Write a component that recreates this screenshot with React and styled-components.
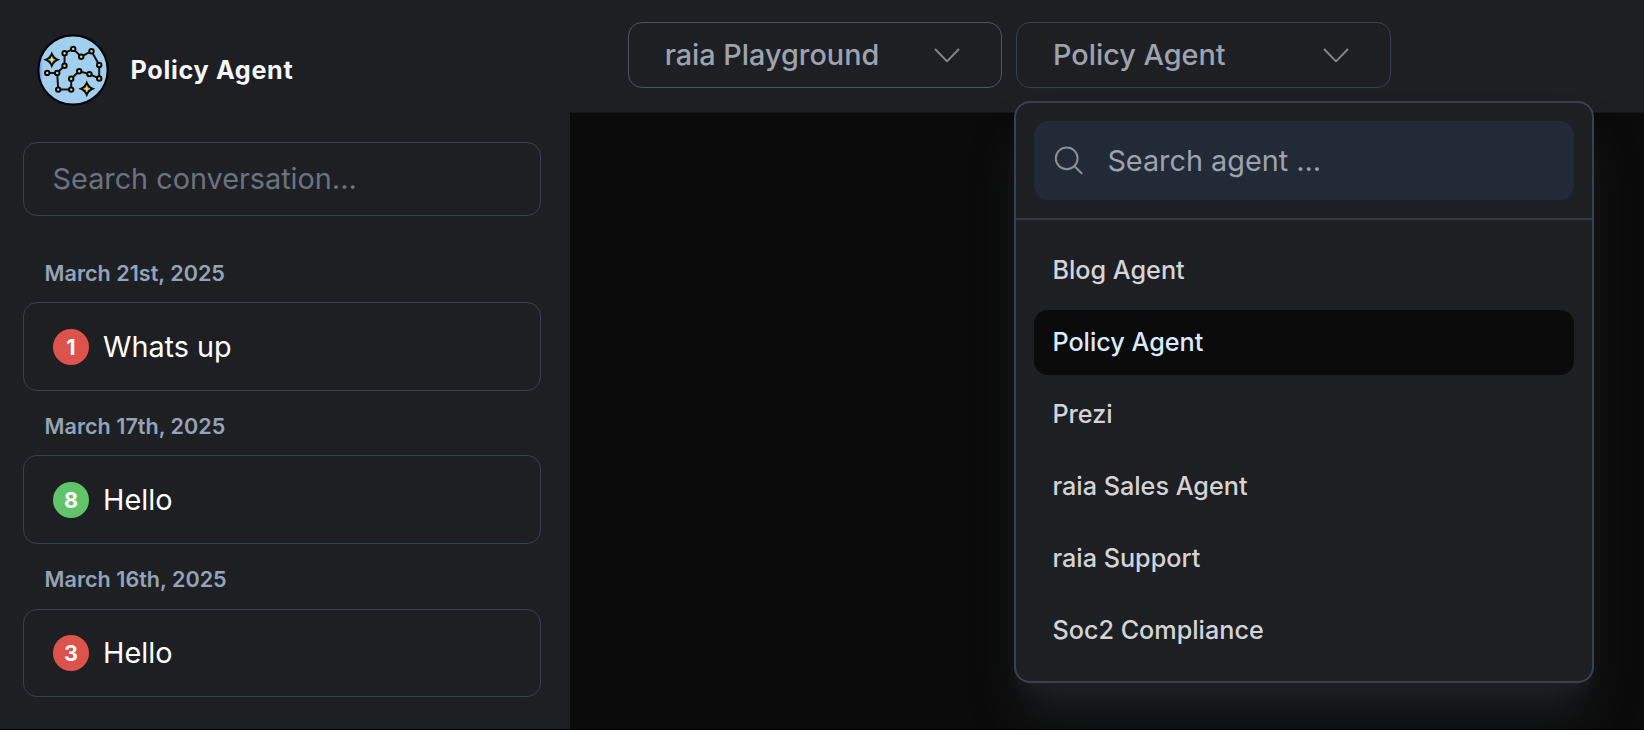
import React from 'react';
import styled, { createGlobalStyle } from 'styled-components';

const GlobalStyle = createGlobalStyle`
  *, *::before, *::after { box-sizing: border-box; }
  body {
    margin: 0;
    background: #000;
    font-family: Inter, "Liberation Sans", sans-serif;
    -webkit-font-smoothing: antialiased;
  }
`;

const Page = styled.div`
  display: flex;
  width: 1644px;
  height: 730px;
  overflow: hidden;
  background: #0b0b0b;
  border-bottom: 1px solid #000;
`;

const Sidebar = styled.aside`
  width: 570px;
  flex: none;
  padding: 34px 29px 0 23px;
  background: #1e1f23;
`;

const AgentHeader = styled.div`
  display: flex;
  align-items: center;
  gap: 21.6px;
  height: 72px;
  padding-left: 14px;
`;

const Avatar = styled.svg`
  width: 72px;
  height: 72px;
  flex: none;
`;

const AgentName = styled.h1`
  margin: 0;
  font-size: 25.2px;
  line-height: 36px;
  font-weight: 700;
  letter-spacing: 0.66px;
  color: #f5f6fa;
`;

const ConversationSearch = styled.input`
  display: block;
  width: 518px;
  height: 74px;
  margin-top: 36px;
  padding: 0 28.6px 2px;
  border: 1px solid #374151;
  border-radius: 14px;
  background: transparent;
  font: 400 28.8px/40px Inter, sans-serif;
  color: #fff;
  &::placeholder { color: #6b7280; opacity: 1; }
`;

const ConversationGroups = styled.div`
  display: flex;
  flex-direction: column;
  gap: 19.35px;
  padding-top: 41px;
`;

const DateLabel = styled.h2`
  margin: 0 0 13.3px 21.6px;
  font-size: 21.6px;
  line-height: 32px;
  font-weight: 600;
  color: #94a3b8;
`;

const ConversationCard = styled.div`
  display: flex;
  align-items: center;
  gap: 14px;
  width: 518px;
  height: 88.5px;
  padding: 0 29px;
  border: 1px solid #374151;
  border-radius: 14px;
`;

const CountBadge = styled.span`
  display: flex;
  align-items: center;
  justify-content: center;
  width: 36px;
  height: 36px;
  border-radius: 50%;
  background: ${(p) => (p.$tone === 'green' ? '#62c46a' : '#de524c')};
  font-size: 21.6px;
  line-height: 36px;
  font-weight: 700;
  color: #fff;
`;

const ConversationTitle = styled.span`
  font-size: 28.8px;
  line-height: 40px;
  font-weight: 400;
  color: #fff;
`;

const Main = styled.main`
  flex: 1;
  min-width: 0;
`;

const TopBar = styled.header`
  display: flex;
  gap: 14px;
  height: 113px;
  padding: 22px 0 0 58px;
  background: #1e1f23;
  border-bottom: 1px solid #16171a;
`;

const SelectAnchor = styled.div`
  position: relative;
  width: 374.4px;
  height: 66px;
`;

const SelectButton = styled.button`
  display: flex;
  align-items: center;
  justify-content: space-between;
  width: 100%;
  height: 100%;
  padding: 0 40px 0 35.7px;
  border: 1px solid ${(p) => (p.$strong ? '#4b5563' : '#374151')};
  border-radius: 14px;
  background: transparent;
  font: 500 28.8px/40px Inter, sans-serif;
  color: #9ca3af;
`;

const Chevron = styled.svg`
  width: 28px;
  height: 28px;
  flex: none;
`;

const AgentMenu = styled.div`
  position: absolute;
  top: 79px;
  left: -2px;
  width: 580px;
  height: 582px;
  border: 2px solid #374151;
  border-radius: 16px;
  background: #1e1f23;
  box-shadow: 0 36px 45px -9px #1e2023, 0 14.4px 18px -10.8px #1e2023;
`;

const MenuSearchRow = styled.div`
  padding: 18px;
  border-bottom: 2px solid #303a49;
`;

const MenuSearch = styled.label`
  display: flex;
  align-items: center;
  gap: 22px;
  height: 79px;
  padding: 0 19px;
  border-radius: 14px;
  background: #222937;
`;

const SearchIcon = styled.svg`
  width: 32px;
  height: 32px;
  flex: none;
`;

const MenuInput = styled.input`
  flex: 1;
  min-width: 0;
  padding: 0;
  border: 0;
  outline: 0;
  background: transparent;
  font: 400 28.8px/40px Inter, sans-serif;
  color: #fff;
  &::placeholder { color: #9ca3af; opacity: 1; }
`;

const MenuList = styled.ul`
  display: flex;
  flex-direction: column;
  gap: 7px;
  margin: 0;
  padding: 18px;
  list-style: none;
`;

const MenuItem = styled.li`
  display: flex;
  align-items: center;
  height: 65px;
  padding: 0 18px 2px;
  border-radius: 14px;
  background: ${(p) => (p.$selected ? '#0b0b0b' : 'transparent')};
  font-size: 25.2px;
  line-height: 36px;
  font-weight: 500;
  color: ${(p) => (p.$selected ? '#dbeafe' : '#d4d4d8')};
`;

const conversations = [
  { date: 'March 21st, 2025', count: 1, tone: 'red', title: 'Whats up' },
  { date: 'March 17th, 2025', count: 8, tone: 'green', title: 'Hello' },
  { date: 'March 16th, 2025', count: 3, tone: 'red', title: 'Hello' },
];

const agents = ['Blog Agent', 'Policy Agent', 'Prezi', 'raia Sales Agent', 'raia Support', 'Soc2 Compliance'];

const stars = [
  [10.2, 38.9], [20.2, 38.9], [27.5, 31.8], [27.6, 19.2], [36.2, 14.9], [44.2, 22.7],
  [54.5, 17.2], [62.2, 30.9], [62.2, 44.5], [52.4, 40.1], [42.2, 37.2], [34.2, 44.8],
  [34.2, 55.6], [21.2, 55.6], [20.2, 38.9],
];

function ConstellationAvatar() {
  return (
    <Avatar viewBox="0 0 72 72" aria-hidden="true">
      <defs>
        <linearGradient id="rim" x1="0" x2="1">
          <stop offset="0" stopColor="#6f78f0" />
          <stop offset="0.07" stopColor="#a3cfef" />
        </linearGradient>
      </defs>
      <circle cx="36" cy="36" r="34.7" fill="url(#rim)" stroke="#040507" strokeWidth="2.2" />
      <polyline points={stars.map((s) => s.join(',')).join(' ')} fill="none" stroke="#10131a" strokeWidth="2" />
      {stars.slice(0, -1).map(([x, y]) => (
        <circle key={`${x}-${y}`} cx={x} cy={y} r="2.2" fill="#f0d560" stroke="#08090c" strokeWidth="2" />
      ))}
      {[[14.8, 25.8], [49.8, 54.8]].map(([x, y]) => (
        <g key={x} transform={`translate(${x} ${y})`}>
          <path d="M0-8.5Q1.8-1.8 8.5 0Q1.8 1.8 0 8.5Q-1.8 1.8-8.5 0Q-1.8-1.8 0-8.5Z" fill="#08090c" />
          <path d="M0-3.4Q.5-.5 3.4 0Q.5.5 0 3.4Q-.5.5-3.4 0Q-.5-.5 0-3.4Z" fill="#f3dc6a" stroke="#f3dc6a" strokeWidth="0.5" />
        </g>
      ))}
    </Avatar>
  );
}

function ChevronDown() {
  return (
    <Chevron viewBox="0 0 28 28" fill="none" stroke="#85868a" strokeWidth="1.9" strokeLinecap="round" strokeLinejoin="round">
      <path d="M2.5 8.5 14 20.3 25.5 8.5" />
    </Chevron>
  );
}

export default function App() {
  return (
    <>
      <GlobalStyle />
      <Page>
        <Sidebar>
          <AgentHeader>
            <ConstellationAvatar />
            <AgentName>Policy Agent</AgentName>
          </AgentHeader>
          <ConversationSearch placeholder="Search conversation..." />
          <ConversationGroups>
            {conversations.map((c) => (
              <section key={c.date}>
                <DateLabel>{c.date}</DateLabel>
                <ConversationCard>
                  <CountBadge $tone={c.tone}>{c.count}</CountBadge>
                  <ConversationTitle>{c.title}</ConversationTitle>
                </ConversationCard>
              </section>
            ))}
          </ConversationGroups>
        </Sidebar>
        <Main>
          <TopBar>
            <SelectAnchor>
              <SelectButton $strong>
                raia Playground
                <ChevronDown />
              </SelectButton>
            </SelectAnchor>
            <SelectAnchor>
              <SelectButton>
                Policy Agent
                <ChevronDown />
              </SelectButton>
              <AgentMenu>
                <MenuSearchRow>
                  <MenuSearch>
                    <SearchIcon viewBox="0 0 32 32" fill="none" stroke="#8b8e94" strokeWidth="2" strokeLinecap="round">
                      <circle cx="13.7" cy="13.3" r="10.9" />
                      <path d="M21.6 21.2 28.6 28.3" />
                    </SearchIcon>
                    <MenuInput placeholder="Search agent ..." />
                  </MenuSearch>
                </MenuSearchRow>
                <MenuList>
                  {agents.map((name) => (
                    <MenuItem key={name} $selected={name === 'Policy Agent'}>{name}</MenuItem>
                  ))}
                </MenuList>
              </AgentMenu>
            </SelectAnchor>
          </TopBar>
        </Main>
      </Page>
    </>
  );
}
